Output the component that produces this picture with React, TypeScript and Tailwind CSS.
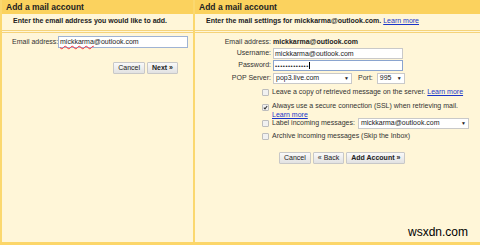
import React from 'react';

const font = { fontFamily: '"Liberation Sans", Arial, sans-serif' };

const Btn = ({ children, bold }: { children: React.ReactNode; bold?: boolean }) => (
  <button
    className={`h-[12px] px-[4px] text-[7px] leading-[10px] text-[#222] border border-[#c8c8c8] rounded-[1px] bg-gradient-to-b from-[#f9f9f9] to-[#e2e2e2] ${bold ? 'font-bold' : ''}`}
  >
    {children}
  </button>
);

const Check = ({ checked }: { checked?: boolean }) => (
  <span className="w-[7px] h-[7px] shrink-0 border border-[#bdbdbd] rounded-[1px] bg-[#f1f1f1] flex items-center justify-center">
    {checked && (
      <svg width="5" height="5" viewBox="0 0 6 6">
        <path d="M1 3.2 L2.4 4.6 L5 1.2" stroke="#333" strokeWidth="1.3" fill="none" />
      </svg>
    )}
  </span>
);

const Header = ({ sub }: { sub: React.ReactNode }) => (
  <>
    <div className="h-[14px] bg-[#fbd25e] flex items-center pl-[4px] text-[8.5px] font-bold text-[#222]">
      Add a mail account
    </div>
    <div className="h-[19px] border-b-[3px] border-double border-[#f5d37a] flex items-center pl-[11px] pb-[1px] text-[7px] font-bold text-[#222]">
      {sub}
    </div>
  </>
);

export default function App() {
  return (
    <div style={font} className="w-[480px] h-[245px] flex bg-[#fff6d8] border-b-[3px] border-[#fcd669] overflow-hidden">
      {/* Left panel */}
      <div className="w-[195px] shrink-0 border-l-[2px] border-r-[2px] border-[#fbd86f]">
        <Header sub="Enter the email address you would like to add." />
        <div className="flex items-center mt-[3px] pl-[10px] gap-[2px] h-[12px]">
          <span className="text-[7px] text-[#333] w-[44px] whitespace-nowrap">Email address:</span>
          <div className="w-[130px] h-[12px] bg-white border border-[#9fb3d4] text-[7px] leading-[10px] px-[1px] text-[#222]">
            <span className="underline decoration-wavy decoration-red-500 decoration-[0.5px]">mickkarma</span>@outlook.com
          </div>
        </div>
        <div className="flex justify-end gap-[2px] mt-[14px] pr-[15px]">
          <Btn>Cancel</Btn>
          <Btn bold>Next »</Btn>
        </div>
      </div>

      {/* Right panel */}
      <div className="flex-1 relative">
        <Header
          sub={
            <span>
              Enter the mail settings for mickkarma@outlook.com.{' '}
              <span className="text-[#1a35c8] underline font-normal">Learn more</span>
            </span>
          }
        />
        <div className="text-[7px] text-[#333] whitespace-nowrap">
          <div className="flex mt-[4px] h-[10px] items-center">
            <span className="w-[78px] text-right pr-[2px]">Email address:</span>
            <span className="font-bold text-[#222]">mickkarma@outlook.com</span>
          </div>
          <div className="flex h-[11px] items-center mt-[1px]">
            <span className="w-[78px] text-right pr-[2px]">Username:</span>
            <div className="w-[130px] h-[11px] bg-white border border-[#c9c9c9] leading-[9px] px-[1px] text-[#222]">mickkarma@outlook.com</div>
          </div>
          <div className="flex h-[11px] items-center mt-[1px]">
            <span className="w-[78px] text-right pr-[2px]">Password:</span>
            <div className="w-[130px] h-[11px] bg-white border border-[#8aa4cf] px-[1px] text-[#222] flex items-center">
              <span className="text-[6px] leading-[6px] tracking-[0.5px]">•••••••••••••</span>
              <span className="w-px h-[7px] bg-black" />
            </div>
          </div>
          <div className="flex h-[11px] items-center mt-[2px]">
            <span className="w-[78px] text-right pr-[2px]">POP Server:</span>
            <div className="w-[79px] h-[11px] bg-white border border-[#c9c9c9] flex items-center justify-between px-[2px] text-[#222]">
              <span>pop3.live.com</span>
              <span className="text-[5px]">▼</span>
            </div>
            <span className="ml-[6px] mr-[4px]">Port:</span>
            <div className="w-[28px] h-[11px] bg-white border border-[#c9c9c9] flex items-center justify-between px-[2px] text-[#222]">
              <span>995</span>
              <span className="text-[5px]">▼</span>
            </div>
          </div>

          <div className="pl-[67px] mt-[3px] flex flex-col">
            <div className="flex items-center gap-[3px] h-[10px]">
              <Check />
              <span>
                Leave a copy of retrieved message on the server. <span className="text-[#1a35c8] underline">Learn more</span>
              </span>
            </div>
            <div className="flex items-start gap-[3px] mt-[4px] h-[18px]">
              <span className="mt-[3px]"><Check checked /></span>
              <span className="leading-[9px]">
                Always use a secure connection (SSL) when retrieving mail.
                <br />
                <span className="text-[#1a35c8] underline">Learn more</span>
              </span>
            </div>
            <div className="flex items-center gap-[3px] h-[11px] -mt-[1px]">
              <Check />
              <span>Label incoming messages:</span>
              <div className="w-[111px] h-[11px] bg-white border border-[#c9c9c9] flex items-center justify-between px-[2px] text-[#222]">
                <span>mickkarma@outlook.com</span>
                <span className="text-[5px]">▼</span>
              </div>
            </div>
            <div className="flex items-center gap-[3px] h-[10px] mt-[2px]">
              <Check />
              <span>Archive incoming messages (Skip the Inbox)</span>
            </div>
          </div>

          <div className="flex gap-[2px] pl-[84px] mt-[11px]">
            <Btn>Cancel</Btn>
            <Btn>« Back</Btn>
            <Btn bold>Add Account »</Btn>
          </div>
        </div>
        <div className="absolute right-[12px] bottom-[2px] text-[12px] leading-[15px] text-black">wsxdn.com</div>
      </div>
    </div>
  );
}
